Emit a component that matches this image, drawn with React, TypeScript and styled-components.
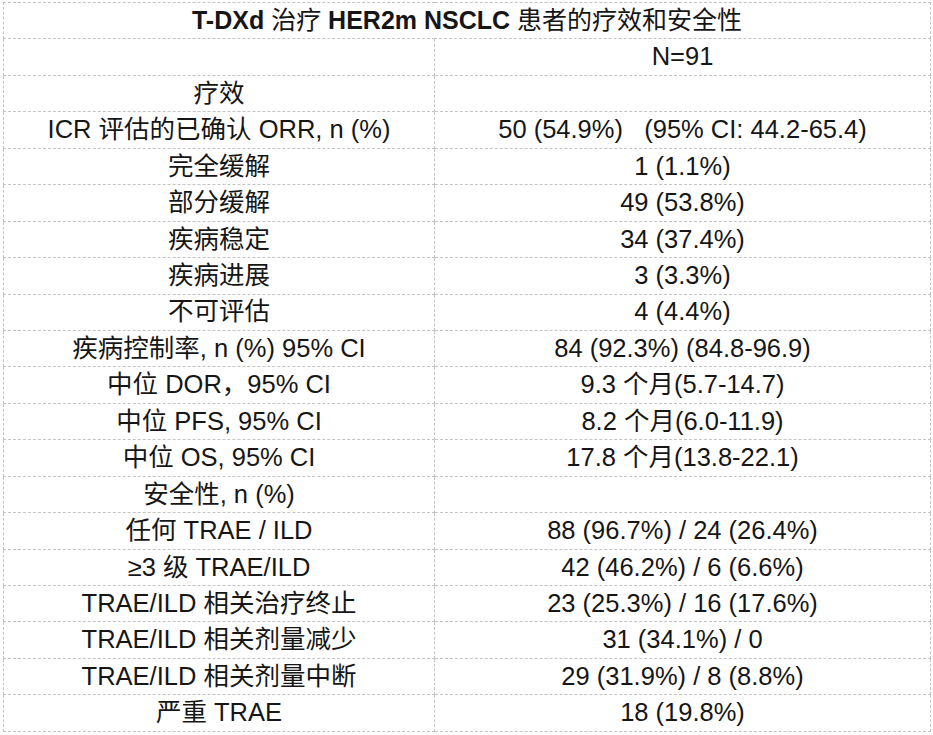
import React from "react";
import styled, { createGlobalStyle } from "styled-components";

const Global = createGlobalStyle`
  html, body { margin: 0; padding: 0; background: #ffffff; }
  body {
    font-family: "Liberation Sans", Arial, "Noto Sans CJK SC", sans-serif;
    color: #161616;
  }
`;

const Page = styled.div`
  padding: 2px 0 0 3px;
`;

const Table = styled.table`
  border-collapse: collapse;
  width: 927px;
  table-layout: fixed;
  font-size: 25.5px;
`;

const Col = styled.col<{ $w: number }>`
  width: ${(p) => p.$w}px;
`;

const Row = styled.tr`
  height: 36.45px;
`;

const Cell = styled.td`
  border: 1px dashed #c4c4c4;
  text-align: center;
  vertical-align: middle;
  padding: 0;
  line-height: 1;
  white-space: pre;
`;

const TitleCell = styled(Cell)`
  font-size: 25px;
`;

const Latin = styled.span`
  font-weight: 700;
`;

const Cjk = styled.span`
  font-weight: 400;
`;

const rows: [string, string][] = [
  ["疗效", ""],
  ["ICR 评估的已确认 ORR, n (%)", "50 (54.9%)   (95% CI: 44.2-65.4)"],
  ["完全缓解", "1 (1.1%)"],
  ["部分缓解", "49 (53.8%)"],
  ["疾病稳定", "34 (37.4%)"],
  ["疾病进展", "3 (3.3%)"],
  ["不可评估", "4 (4.4%)"],
  ["疾病控制率, n (%) 95% CI", "84 (92.3%) (84.8-96.9)"],
  ["中位 DOR，95% CI", "9.3 个月(5.7-14.7)"],
  ["中位 PFS, 95% CI", "8.2 个月(6.0-11.9)"],
  ["中位 OS, 95% CI", "17.8 个月(13.8-22.1)"],
  ["安全性, n (%)", ""],
  ["任何 TRAE / ILD", "88 (96.7%) / 24 (26.4%)"],
  ["≥3 级 TRAE/ILD", "42 (46.2%) / 6 (6.6%)"],
  ["TRAE/ILD 相关治疗终止", "23 (25.3%) / 16 (17.6%)"],
  ["TRAE/ILD 相关剂量减少", "31 (34.1%) / 0"],
  ["TRAE/ILD 相关剂量中断", "29 (31.9%) / 8 (8.8%)"],
  ["严重 TRAE", "18 (19.8%)"],
];

export default function App() {
  return (
    <Page>
      <Global />
      <Table>
        <colgroup>
          <Col $w={431} />
          <Col $w={496} />
        </colgroup>
        <tbody>
          <Row>
            <TitleCell colSpan={2}>
              <Latin>T-DXd </Latin>
              <Cjk>治疗</Cjk>
              <Latin> HER2m NSCLC </Latin>
              <Cjk>患者的疗效和安全性</Cjk>
            </TitleCell>
          </Row>
          <Row>
            <Cell />
            <Cell>N=91</Cell>
          </Row>
          {rows.map(([a, b], i) => (
            <Row key={i}>
              <Cell>{a}</Cell>
              <Cell>{b}</Cell>
            </Row>
          ))}
        </tbody>
      </Table>
    </Page>
  );
}
